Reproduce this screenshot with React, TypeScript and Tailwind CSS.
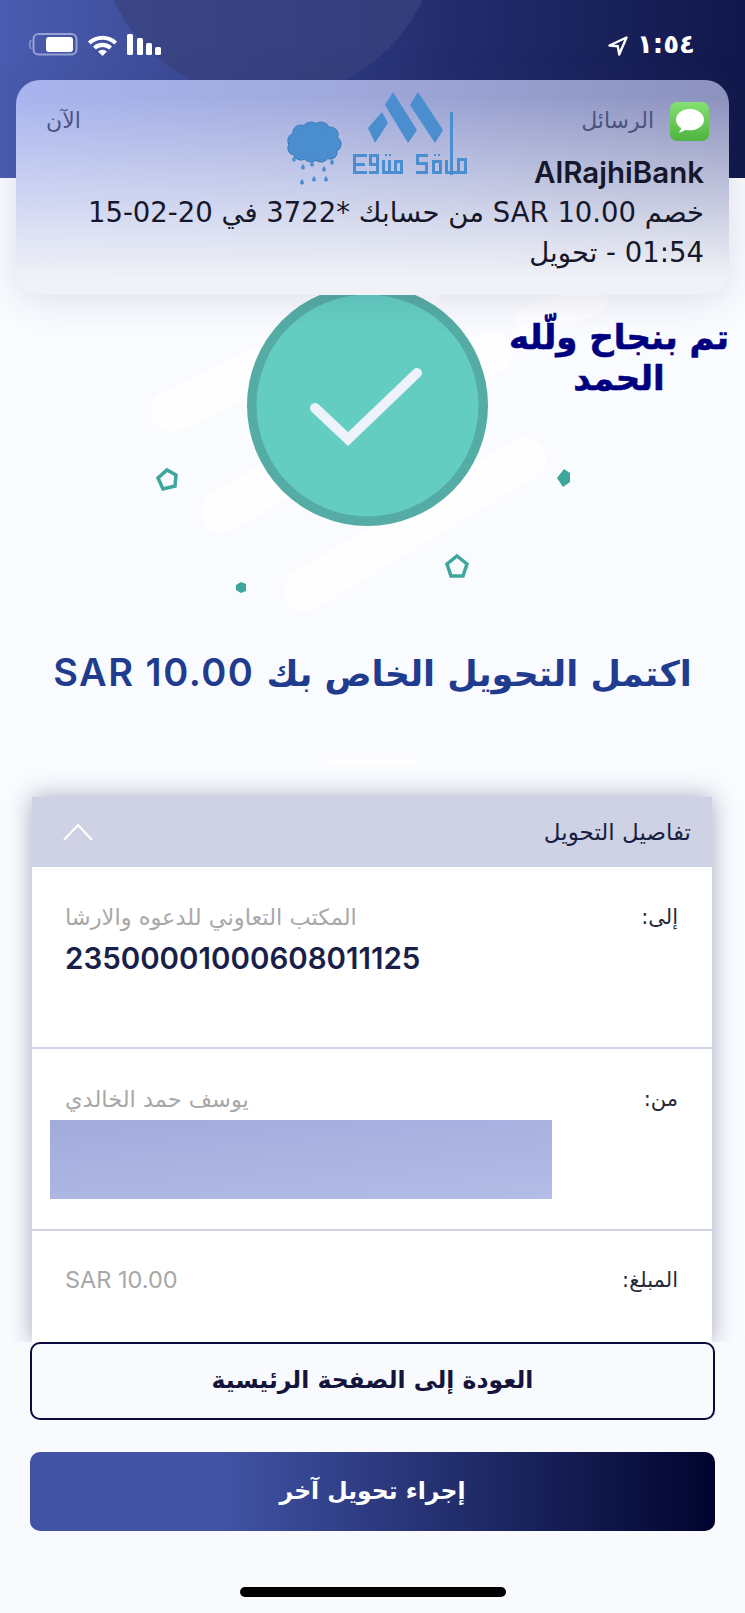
import React from "react";

const AR = "font-['DejaVu_Sans','Noto_Sans',sans-serif]";

function StatusBar() {
  return (
    <div className="flex items-start justify-between pl-[28px] pr-[50px] pt-[33px] text-white">
      <svg width="134" height="24" viewBox="28 34 134 24" fill="none">
        <path d="M31 41 Q28.5 45.5 31 50" stroke="#8f99cf" strokeWidth="1.6" />
        <rect x="33.500" y="35" width="43" height="20.500" rx="5" stroke="#98a2d2" strokeWidth="2" />
        <rect x="46" y="38" width="27" height="15" rx="3" fill="#fff" />
        <path d="M88 42.500 a21 21 0 0 1 29 0 l-2.600 3 a17 17 0 0 0 -23.800 0z" fill="#fff" />
        <path d="M93 47.500 a14 14 0 0 1 19 0 l-2.800 3 a10 10 0 0 0 -13.400 0z" fill="#fff" />
        <path d="M98 52.500 a7 7 0 0 1 9 0 l-4.500 4.500z" fill="#fff" />
        <rect x="127" y="35" width="6" height="21" rx="1.500" fill="#fff" />
        <rect x="137" y="39" width="6" height="17" rx="1.500" fill="#fff" />
        <rect x="146" y="44" width="6" height="12" rx="1.500" fill="#fff" />
        <rect x="155" y="48" width="6" height="8" rx="1.500" fill="#fff" />
      </svg>
      <div className="flex items-center gap-[9px] mt-[-3px]">
        <svg width="20" height="20" viewBox="0 0 20 20" fill="none" className="mt-[3px]">
          <path d="M18.500 1.500 1.500 9.500l8.300.8 1.400 8.200z" stroke="#fff" strokeWidth="2.400" strokeLinejoin="round" />
        </svg>
        <span dir="ltr" className={`${AR} text-[26px] leading-[28px] font-bold text-white`}>١:٥٤</span>
      </div>
    </div>
  );
}

function Notification() {
  return (
    <div className="absolute left-[16px] top-[80px] w-[713px] h-[215px] rounded-[24px] bg-[linear-gradient(180deg,rgba(240,242,247,0)_8%,rgba(240,242,247,0.55)_55%,#f0f2f7_92%),linear-gradient(90deg,#a8b4ee,#a0a9dc_45%,#8c92bd)] shadow-[0_4px_36px_rgba(40,50,100,0.14)]">
      <div className="flex items-center justify-between pl-[30px] pr-[20px] pt-[19px]">
        <span dir="rtl" className={`${AR} text-[22px] leading-[44px] text-[#4c5480]`}>الآن</span>
        <div className="flex items-center gap-[16px]">
          <span dir="rtl" className={`${AR} text-[22px] leading-[44px] text-[#4c5480]`}>الرسائل</span>
          <div className="w-[39px] h-[39px] rounded-[7px] bg-[linear-gradient(180deg,#84e172,#4fb33f)] flex items-center justify-center">
            <svg width="30" height="27" viewBox="0 0 30 27">
              <path d="M15 1C7.300 1 1 5.700 1 11.700c0 3.400 2 6.400 5.200 8.300-.3 1.600-1.200 3.200-2.600 4.400 2.600-.2 5-1.300 6.600-2.700 1.500.4 3.100.6 4.800.6 7.700 0 14-4.700 14-10.600S22.700 1 15 1z" fill="#fff" />
            </svg>
          </div>
        </div>
      </div>
      <div dir="rtl" className="pr-[25px] pt-[9px] text-[#16172a]">
        <div className="font-['Inter',sans-serif] font-semibold text-[29.500px] leading-[40px]">AlRajhiBank</div>
        <div className={`${AR} text-[27.500px] leading-[40px] whitespace-nowrap`}>خصم SAR 10.00 من حسابك *3722 في 20-02-15</div>
        <div className={`${AR} text-[27.500px] leading-[40px]`}>01:54 - تحويل</div>
      </div>
    </div>
  );
}

function Cloud() {
  const bumps = [
    [296, 141, 8], [301, 133, 8], [311, 130, 8], [321, 130, 8], [330, 135, 8], [334, 144, 7],
    [330, 152, 7], [321, 155, 7], [311, 155, 7], [301, 153, 7], [295, 148, 7],
  ];
  const drops = [[294,159],[303,167],[312,164],[324,169],[332,162],[302,182],[314,179],[326,179]];
  return (
    <g>
      {bumps.map(([x, y, r], i) => (
        <circle key={`o${i}`} cx={x} cy={y} r={r + 0.6} fill="#2b6aa3" />
      ))}
      {bumps.map(([x, y, r], i) => (
        <circle key={`i${i}`} cx={x} cy={y} r={r} fill="#4a8ed0" />
      ))}
      <ellipse cx="314" cy="143" rx="20" ry="12" fill="#4a8ed0" />
      {drops.map(([x, y], i) => (
        <path key={i} d={`M${x} ${y - 3} q2.500 3.200 1.800 4.600 a2 2 0 0 1 -3.600 0 q-.7 -1.400 1.800 -4.600z`} fill="#4a8ed0" />
      ))}
    </g>
  );
}

function Watermark() {
  const bars: [number, number, number, number][] = [
    [353,154,3,20],[353,154,14,3],[353,163,12,3],[353,171,14,3],
    [369,154,3,12],[369,154,10,3],[369,163,10,3],[376,154,3,20],[369,171,10,3],
    [382,160,3,14],[388,160,3,14],[382,171,21,3],[385,154,2,2],[389,154,2,2],
    [394,160,3,14],[394,160,9,3],[400,160,3,14],
    [416,154,12,3],[416,154,3,10],[416,162,12,3],[425,162,3,12],[416,171,12,3],
    [432,160,3,14],[432,160,10,3],[439,160,3,14],[432,171,10,3],[434,154,2,2],[438,154,2,2],
    [445,160,3,14],[445,171,22,3],
    [457,158,3,16],[464,158,3,16],[457,158,10,3],
  ];
  return (
    <svg className="absolute left-[270px] top-[80px]" width="210" height="110" viewBox="270 80 210 110">
      <Cloud />
      <g fill="#4a8ed0">
        <polygon points="368,128 382,112 388,123 375,143" />
        <polygon points="393,92 385,105 408,143 417,130" />
        <polygon points="418,92 410,105 435,143 443,130" />
        <rect x="450" y="112" width="3" height="63" />
        {bars.map(([x, y, w, h], i) => (
          <rect key={i} x={x} y={y} width={w} height={h} />
        ))}
      </g>
    </svg>
  );
}

function Hero() {
  return (
    <svg width="745" height="460" viewBox="0 178 745 460" className="block shrink-0">
      <g stroke="#ffffff" strokeOpacity="0.8" strokeWidth="42" strokeLinecap="round" fill="none">
        <line x1="172" y1="411" x2="420" y2="290" />
        <line x1="222" y1="512" x2="492" y2="352" />
        <line x1="305" y1="590" x2="525" y2="458" />
        <line x1="530" y1="322" x2="592" y2="300" strokeWidth="30" />
      </g>
      <circle cx="367.500" cy="405.500" r="120.500" fill="#55aca5" />
      <circle cx="367.500" cy="405.500" r="111" fill="#64cdc2" />
      <path d="M315 408 L348 439 L417 373" stroke="#eef2fb" strokeWidth="10" strokeLinecap="round" fill="none" />
      <polygon points="167,470 176,475 175,486 163,489 158,478" fill="none" stroke="#3ea69d" strokeWidth="3.500" />
      <polygon points="564,469 570,473 570,482 563,487 557,478" fill="#3ea69d" />
      <polygon points="457,556 467,564 463,576 451,576 447,564" fill="none" stroke="#3ea69d" strokeWidth="3.500" />
      <polygon points="241,582 246,584 246,591 241,593 236,590 236,585" fill="#3ea69d" />
    </svg>
  );
}

function Row({ label, children, h }: { label: string; children: React.ReactNode; h: string }) {
  return (
    <div className={`${h} border-b-2 border-[#cfd3e4] flex justify-between pl-[33px] pr-[34px]`}>
      <div className="flex-1 min-w-0">{children}</div>
      <span dir="rtl" className={`${AR} text-[21px] leading-[30px] mt-[35px] text-[#26283a]`}>{label}</span>
    </div>
  );
}

export default function App() {
  return (
    <div className="relative w-[745px] h-[1613px] overflow-hidden bg-[#fafbff] flex flex-col">
      <header className="relative h-[178px] shrink-0 overflow-hidden bg-[linear-gradient(90deg,#4a5cb0_0%,#3c4b97_25%,#232d6e_60%,#10174a_100%)]">
        <div className="absolute left-[97px] top-[-244px] w-[342px] h-[342px] rounded-full bg-[linear-gradient(90deg,#3b4688,#343d7a)]" />
        <div className="relative">
          <StatusBar />
        </div>
      </header>

      <main className="flex-1 min-h-0 overflow-hidden flex flex-col">
        <Hero />
        <h1 dir="rtl" className={`${AR} h-[68px] text-center text-[#1f3c8e] text-[35px] leading-[68px] font-bold whitespace-nowrap`}>
          اكتمل التحويل الخاص بك <span className="font-['Inter',sans-serif] font-semibold text-[38px] tracking-[1.500px]">SAR 10.00</span>
        </h1>
        <div className="mx-auto mt-[53px] h-[6px] w-[87px] bg-white shrink-0" />
        <section className="mx-[32px] mt-[32px] w-[680px] bg-white flex-1 shadow-[0_0_22px_rgba(40,45,90,0.4)]">
          <div className="h-[70px] bg-[#ced2e4] flex items-center justify-between pl-[30px] pr-[21px]">
            <svg width="32" height="20" viewBox="0 0 32 20" fill="none">
              <path d="M2 18 L16 3 L30 18" stroke="#fff" strokeWidth="2.200" />
            </svg>
            <span dir="rtl" className={`${AR} text-[23px] text-[#1a1f40]`}>تفاصيل التحويل</span>
          </div>
          <Row label="إلى:" h="h-[182px]">
            <div dir="rtl" className={`${AR} text-left text-[22.500px] leading-[30px] mt-[35px] text-[#a8a8a8] whitespace-nowrap`}>
              المكتب التعاوني للدعوه والارشا
            </div>
            <div className="font-['Inter',sans-serif] font-semibold text-[29.500px] leading-[32px] mt-[10px] text-[#1a1f4a]">23500001000608011125</div>
          </Row>
          <Row label="من:" h="h-[182px]">
            <div dir="rtl" className={`${AR} text-left text-[22.500px] leading-[30px] mt-[35px] text-[#a8a8a8] whitespace-nowrap`}>
              يوسف حمد الخالدي
            </div>
            <div className="ml-[-15px] mt-[6px] w-[502px] h-[79px] bg-[linear-gradient(175deg,#a1abdc,#b4bde6)]" />
          </Row>
          <div className="flex justify-between pl-[33px] pr-[34px]">
            <span className="font-['Inter',sans-serif] text-[23.500px] leading-[30px] mt-[34px] text-[#a8a8a8]">SAR 10.00</span>
            <span dir="rtl" className={`${AR} text-[21px] leading-[30px] mt-[34px] text-[#26283a]`}>المبلغ:</span>
          </div>
        </section>
      </main>

      <footer className="relative shrink-0 h-[271px] bg-[#f9fafe] px-[30px] flex flex-col">
        <button dir="rtl" className={`${AR} h-[78px] w-[685px] rounded-[10px] border-2 border-[#0a0a3c] text-[23.500px] font-bold text-[#14143c]`}>
          العودة إلى الصفحة الرئيسية
        </button>
        <button dir="rtl" className={`${AR} mt-[32px] h-[79px] w-[685px] rounded-[10px] text-[23.500px] font-bold text-white bg-[linear-gradient(90deg,#4153a5_0%,#4153a5_28%,#00042e_100%)]`}>
          إجراء تحويل آخر
        </button>
        <div className="mx-auto mt-[56px] h-[10px] w-[266px] rounded-full bg-black" />
      </footer>

      <Notification />
      <Watermark />
      <div dir="rtl" className={`${AR} absolute left-[505px] top-[317px] w-[228px] text-center text-[34px] leading-[41px] font-bold text-[#000080] [-webkit-text-stroke:0.6px_#000080]`}>
        تم بنجاح ولّله الحمد
      </div>
    </div>
  );
}
